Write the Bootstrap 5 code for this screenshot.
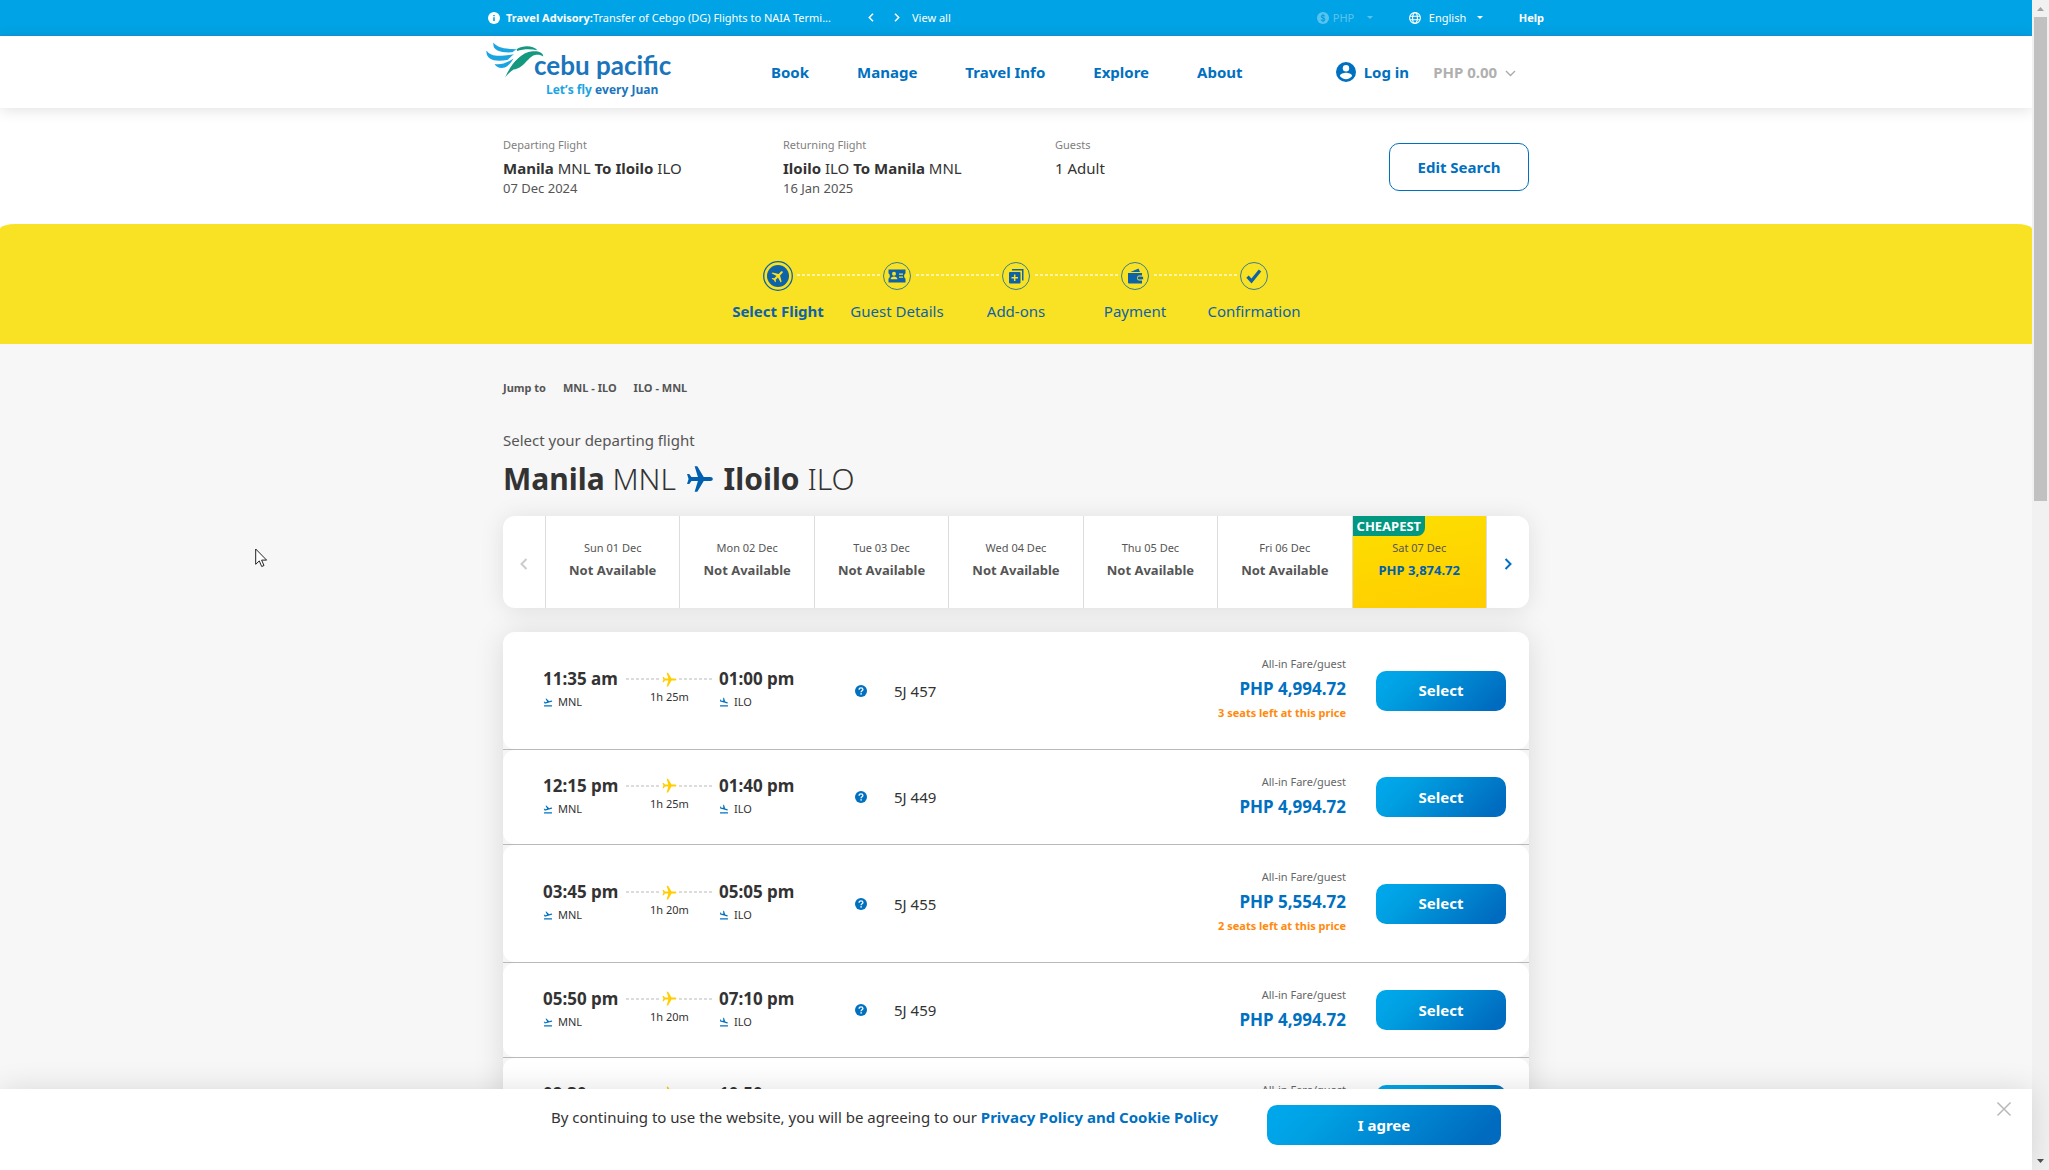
<!DOCTYPE html>
<html lang="en">
<head>
<meta charset="utf-8">
<meta name="viewport" content="width=device-width, initial-scale=1">
<title>Cebu Pacific - Select Flight</title>
<link href="https://cdn.jsdelivr.net/npm/bootstrap@5.3.0/dist/css/bootstrap.min.css" rel="stylesheet">
<style>
:root{--cp-blue:#0070c0;--cp-deep:#0e62a8;--cp-sky:#00a3e5;--cp-text:#333}
body{font-family:"Noto Sans",sans-serif;font-size:15px;line-height:22px;color:var(--cp-text);background:#fff}
a{text-decoration:none}
.shell{height:100vh;overflow:hidden}
.view{overflow:hidden;background:#f7f7f7;min-width:0}
.wrap{max-width:1080px;margin:0 auto;width:100%}
.inner{max-width:1026px;margin:0 auto;width:100%}
.fs-tiny{font-size:11px;line-height:16px}
.fs-date{font-size:13px;line-height:18px;color:#555}

.topbar{background:var(--cp-sky);height:36px;border-bottom:1px solid #1497dc;color:#fff;font-size:11px;line-height:16px}
.topbar a,.topbar select{color:#fff}
.advisory{width:336px;gap:6px}
.topbar .flat{background:none;border:0;color:#fff;padding:0;line-height:0}
.tools{gap:36px}
.pick{appearance:none;background:none;border:0;padding:0;font-size:11px;line-height:16px}
.pick:disabled{opacity:1}
.pick-php{width:34px}
.pick-lang{width:48px}
.dimmed{opacity:.35}

.mainnav{background:#fff;height:72px;box-shadow:0 2px 14px rgba(0,0,0,.12);position:relative;z-index:2}
.logo-link{width:190px;padding:0 0 4px 10px}
.wordmark{font-family:Lato,sans-serif;font-size:26px;line-height:30px;font-weight:700;color:#1b75bc;margin-left:-18px;padding-top:8px}
.tagline{font-family:"Open Sans","Noto Sans",sans-serif;font-size:12px;line-height:16px;font-weight:700;color:#1b75bc;padding-left:60px;margin-top:2px}
.tagline span{color:#1ba5e0}
.menu{gap:48px;margin-left:105px}
.menu a,.login{color:var(--cp-blue);font-weight:700}
.basket{background:none;border:0;padding:0;color:#b0b0b0;font-weight:700}

.search{background:#fff;padding:29px 0 27px}
.search .from{width:280px}
.search .back{width:272px}
.lbl{color:#808080}
.btn-edit{width:140px;height:48px;border:1px solid var(--cp-blue);border-radius:10px;color:var(--cp-blue);font-size:15px;font-weight:700}

.yellow{background:#fff}
.band{background:#f9e223;border-radius:16px 16px 0 0/5px 5px 0 0;padding:37px 0 22px}
.step{width:119px;position:relative;color:var(--cp-deep);text-align:center}
.step:not(:last-child)::after{content:"";position:absolute;left:78px;width:84px;top:13px;height:2px;background:repeating-linear-gradient(90deg,rgba(255,255,255,.6) 0 3px,transparent 3px 5px)}
.dot{height:30px;margin-bottom:9px}

.jump{gap:17px;padding-top:35px;font-size:11px;line-height:18px;font-weight:700}
.jump,.jump a{color:#555}
.sub{margin-top:32px;color:#555}
.route-title{font-size:30px;line-height:40px;font-weight:300;margin:8px 0 17px}
.route-title svg{margin:0 2px;vertical-align:-3px}

.strip{background:#fff;border-radius:12px;height:92px;box-shadow:0 2px 24px rgba(0,0,0,.1)}
.arrow{width:42px;background:none;border:0;padding:0;color:#ccc}
.day{border:0;border-left:1px solid #ddd;background:#fff;padding:24px 0 0;color:#555;position:relative}
.day b{display:block;font-size:13px;line-height:18px;margin-top:5px}
.day small{display:block;font-size:11px;line-height:16px}
.day.best{background:linear-gradient(170deg,#fddf00,#ffcd00)}
.day.best b{color:#005fae}
.tag{position:absolute;left:0;top:0;background:#009881;color:#fff;font-size:13px;line-height:20px;font-weight:700;padding:0 4px;border-radius:0 0 8px 0}
.edge{border-left:1px solid #ddd;color:#0070c0;width:43px}

.flights{margin-top:24px;border-radius:12px;background:#f5f5f5;box-shadow:0 2px 30px rgba(0,0,0,.12)}
.flight{background:#fff;border-radius:12px;padding:0 23px 0 40px}
.divider{height:1px;background:#b9b9b9}
.when{padding-bottom:3px}
.clock{font-size:17px;line-height:24px;font-weight:700}
.leg{width:83px}
.arr{width:136px;margin-left:6px}
.code{gap:5px;margin-top:2px;font-size:11px;line-height:18px}
.path{width:87px;text-align:center}
.track{height:24px;gap:2px}
.dash{flex:1;height:2px;background:repeating-linear-gradient(90deg,#dcdcdc 0 3px,transparent 3px 5px)}
.dur{font-size:11px;line-height:12px}
.fno{margin-left:27px}
.fare{text-align:right;padding:23px 30px 21px 0}
.fare .cap{font-size:11px;line-height:18px;color:#666}
.fare .amt{font-size:17px;line-height:32px;font-weight:700;color:var(--cp-blue)}
.fare .left{font-size:11px;line-height:15px;padding-bottom:8px;font-weight:700;color:#ff8a0c}
.btn-go{background:linear-gradient(135deg,#00a6ea 10%,#00a0e2 25%,#006bbf 90%);color:#fff;border:0;border-radius:10px;height:40px;width:130px;font-weight:700;font-size:15px;padding:0}
.btn-go:hover{color:#fff}

.cookie{position:absolute;left:0;right:17px;bottom:0;background:#fff;height:81px;padding-top:16px;box-shadow:0 0 30px rgba(0,0,0,.12);z-index:5}
.cookie .line{max-width:950px;margin-left:auto;margin-right:auto}
.cookie p{margin:0;padding-top:1px}
.cookie a{color:var(--cp-blue);font-weight:700}
.cookie .btn-go{width:234px}
.offset{padding-left:20px}
.shut{position:absolute;right:20px;top:12px;background:none;border:0;padding:0;line-height:0}
.rail{width:17px;background:#f1f1f1}
.thumb{width:13px;background:#c1c1c1;height:41.400%}
.pointer{position:absolute;left:255px;top:548px;z-index:6}
</style>
<script src="https://cdn.jsdelivr.net/npm/bootstrap@5.3.0/dist/js/bootstrap.bundle.min.js"></script>
</head>
<body>
<svg width="0" height="0" class="position-absolute" aria-hidden="true">
  <defs>
    <symbol id="plane" viewBox="0 0 24 24"><path d="M23 12c0-1-1-1.700-2-1.700h-5.800L9.700 1H7.400l2.800 9.300H4.700L2.800 7.800H.9L2.200 12 .9 16.200h1.900l1.900-2.500h5.500L7.400 23h2.300l5.500-9.300H21c1 0 2-.7 2-1.700z"/></symbol>
    <symbol id="takeoff" viewBox="0 0 24 24"><path d="M2.500 20h19v2.500h-19zM22 9.600c-.2-.8-1-1.300-1.900-1.100L14.800 10 7.900 3.500 6 4l4.100 7.200-5 1.300-2-1.500-1.400.4 2.600 4.500L20.900 11.600c.8-.3 1.300-1.100 1.100-2z"/></symbol>
    <symbol id="landing" viewBox="0 0 24 24"><path d="M2.500 19.500h19V23h-19zM14 14l5.300 1.400c.8.2 1.600-.3 1.900-1.100.2-.8-.3-1.600-1.100-1.900l-5.300-1.400L12 2 10.100 1.500v8.300L5.100 8.400 4.200 6.100l-1.500-.4v5.200z"/></symbol>
    <symbol id="help" viewBox="0 0 12 12"><circle cx="6" cy="6" r="6" fill="#0070c0"/><path d="M4.100 4.700C4.100 3.500 5 2.800 6 2.800s1.900.7 1.900 1.700c0 1.300-1.800 1.400-1.800 2.700" fill="none" stroke="#fff" stroke-width="1.300"/><circle cx="6.100" cy="8.900" r=".8" fill="#fff"/></symbol>
  </defs>
</svg>
<div class="shell d-flex position-relative">
  <div class="view flex-grow-1">
    <div class="topbar">
      <div class="wrap h-100 d-flex align-items-center">
        <div class="advisory ms-2 ps-1 d-flex align-items-center text-nowrap">
          <svg width="12" height="12" viewBox="0 0 12 12" class="flex-shrink-0"><circle cx="6" cy="6" r="6" fill="#fff"/><path d="M5.200 5.200h1.600V9H5.200zM5.200 2.900h1.600v1.400H5.200z" fill="#00a3e5"/></svg>
          <a href="#"><b>Travel Advisory:</b>Transfer of Cebgo (DG) Flights to NAIA Termi...</a>
        </div>
        <button class="flat ms-5" aria-label="Previous"><svg width="6" height="9" viewBox="0 0 6 9"><path d="M5 .7 1.300 4.500 5 8.300" fill="none" stroke="#fff" stroke-width="1.500"/></svg></button>
        <button class="flat ms-3 me-2 ps-1" aria-label="Next"><svg width="6" height="9" viewBox="0 0 6 9"><path d="M1 .7 4.700 4.500 1 8.300" fill="none" stroke="#fff" stroke-width="1.500"/></svg></button>
        <a href="#" class="ms-1">View all</a>
        <div class="tools ms-auto d-flex align-items-center me-2 pe-1">
          <div class="d-flex align-items-center dimmed">
            <svg width="12" height="12" viewBox="0 0 12 12" class="me-1"><circle cx="6" cy="6" r="6" fill="#fff"/><path d="M7.800 4.300C7.600 3.500 7 3.200 6 3.200c-2.300 0-2.300 2.300 0 2.700 2.500.4 2.300 3 0 3-1.100 0-1.800-.4-2-1.300M6 1.800v8.400" fill="none" stroke="#00a3e5" stroke-width="1.100"/></svg>
            <select class="pick pick-php" aria-label="Currency" disabled><option>PHP</option></select>
            <svg width="6" height="3" viewBox="0 0 6 3"><path d="M0 0h6L3 3z" fill="#fff"/></svg>
          </div>
          <div class="d-flex align-items-center">
            <svg width="12" height="12" viewBox="0 0 12 12" fill="none" stroke="#fff" stroke-width="1.100" class="me-1"><circle cx="6" cy="6" r="5.400"/><ellipse cx="6" cy="6" rx="2.400" ry="5.400"/><path d="M.9 4.200h10.200M.9 7.800h10.200"/></svg>
            <select class="pick pick-lang ms-1" aria-label="Language"><option>English</option></select>
            <svg width="6" height="3" viewBox="0 0 6 3"><path d="M0 0h6L3 3z" fill="#fff"/></svg>
          </div>
          <a href="#" class="fw-bold">Help</a>
        </div>
      </div>
    </div>

    <header class="mainnav">
      <div class="wrap h-100 d-flex align-items-center">
        <a href="#" class="logo-link">
          <div class="d-flex">
            <svg width="66" height="38" viewBox="0 0 66 38" class="flex-shrink-0" aria-hidden="true">
              <path d="M7.500.5C11 5.500 17 6.800 31.500 7.300c-2 .8-3.500 1.700-5 3C14 11 6 8.500 7.500.5z" fill="#1ba5e0"/>
              <path d="M.5 8.500c4 6 12 6.500 27.500 3.700-3 2.200-4.500 3.800-6 5.500C9.500 20.500-.5 18 .5 8.500z" fill="#1ba5e0"/>
              <path d="M8.500 22c5 1 10-.5 15-3l4-2.500c-2 3.500-4 6-6 7.500-4 3-10.500 2.500-13-2z" fill="#1ba5e0"/>
              <path d="M31 7C37 3 47 3 51.500 8.300 44 6.500 37.500 7 31 8.900z" fill="#159880"/>
              <path d="M19 35.500C25 23 33 11 46.500 9.300c5-.6 10.500.5 10.800 5.200-2.300-1.700-5.300-2.100-8.300-1.500-5 1-8.500 7.500-14 11.500-2.500 1.800-5 2.700-7.500 3-3.500 2.500-6 4.600-8.500 8z" fill="#159880"/>
              <path d="M22 27.500C27 19 32 12.500 41 9.100 34 13.500 28 19.500 22 27.500z" fill="#fff"/>
            </svg>
            <span class="wordmark text-nowrap">cebu pacific</span>
          </div>
          <div class="tagline text-nowrap"><span>Let’s fly</span> every Juan</div>
        </a>
        <nav class="menu d-flex text-nowrap"><a href="#">Book</a><a href="#">Manage</a><a href="#">Travel Info</a><a href="#">Explore</a><a href="#">About</a></nav>
        <div class="ms-auto me-4 pe-3 d-flex align-items-center text-nowrap">
          <a href="#" class="login d-flex align-items-center me-4"><svg width="20" height="20" viewBox="0 0 20 20" class="me-2"><circle cx="10" cy="10" r="10" fill="#0070c0"/><circle cx="10" cy="6.300" r="3.200" fill="#fff"/><path d="M3.900 14c0-2.200 4-3.300 6.100-3.300s6.100 1.100 6.100 3.300a7.400 7.400 0 0 1-12.200 0z" fill="#fff"/></svg>Log in</a>
          <button class="basket">PHP 0.00 <svg width="11" height="7" viewBox="0 0 11 7" class="ms-1"><path d="m1 1 4.500 4.500L10 1" fill="none" stroke="#aaa" stroke-width="1.400"/></svg></button>
        </div>
      </div>
    </header>

    <section class="search">
      <div class="inner d-flex align-items-center">
        <div class="from"><div class="fs-tiny lbl mb-1">Departing Flight</div><div><b>Manila</b> MNL <b>To</b> <b>Iloilo</b> ILO</div><div class="fs-date">07 Dec 2024</div></div>
        <div class="back"><div class="fs-tiny lbl mb-1">Returning Flight</div><div><b>Iloilo</b> ILO <b>To</b> <b>Manila</b> MNL</div><div class="fs-date">16 Jan 2025</div></div>
        <div class="align-self-start"><div class="fs-tiny lbl mb-1">Guests</div><div>1 Adult</div></div>
        <button class="btn btn-edit ms-auto">Edit Search</button>
      </div>
    </section>

    <section class="yellow"><div class="band d-flex justify-content-center">
      <div class="step fw-bold"><div class="dot"><svg width="30" height="30" viewBox="0 0 30 30"><circle cx="15" cy="15" r="14.300" fill="none" stroke="#0e62a8" stroke-width="1.300"/><circle cx="15" cy="15" r="11" fill="#0e62a8"/><use href="#plane" x="8" y="8" width="14" height="14" fill="#f9e223" transform="rotate(-45 15 15)"/></svg></div>Select Flight</div>
      <div class="step"><div class="dot"><svg width="30" height="30" viewBox="0 0 30 30" fill="#0e62a8"><circle cx="15" cy="15" r="13.500" fill="none" stroke="#0e62a8" stroke-width=".8"/><path d="M6.500 8.500h17v4c-1.800.6-1.800 4.400 0 5v4h-17v-4c1.800-.6 1.800-4.400 0-5z"/><g fill="#f9e223"><circle cx="12" cy="12.700" r="2"/><path d="M8.600 18.300c0-3.700 6.800-3.700 6.800 0zM17 12.500h4v1.300h-4zM17 15.500h4v1.300h-4z"/></g></svg></div>Guest Details</div>
      <div class="step"><div class="dot"><svg width="30" height="30" viewBox="0 0 30 30" fill="#0e62a8"><circle cx="15" cy="15" r="13.500" fill="none" stroke="#0e62a8" stroke-width=".8"/><rect x="8" y="11" width="11.500" height="11.500" rx="1"/><path d="M11 8h11.500v11.500H21V9.500H11z"/><path d="M13.700 13.500v6.500M10.500 16.700H17" stroke="#f9e223" stroke-width="1.500"/></svg></div>Add-ons</div>
      <div class="step"><div class="dot"><svg width="30" height="30" viewBox="0 0 30 30" fill="#0e62a8"><circle cx="15" cy="15" r="13.500" fill="none" stroke="#0e62a8" stroke-width=".8"/><path d="M8 12h14v10.500H9a1 1 0 0 1-1-1zM10.500 11l8-3.500L20 11z"/><rect x="17.500" y="15" width="6" height="4" rx="1.500" stroke="#f9e223" stroke-width="1"/></svg></div>Payment</div>
      <div class="step"><div class="dot"><svg width="30" height="30" viewBox="0 0 30 30"><circle cx="15" cy="15" r="13.500" fill="none" stroke="#0e62a8" stroke-width=".8"/><path d="m8.500 15.700 4 4.300L21 9.500" fill="none" stroke="#0e62a8" stroke-width="3.200"/></svg></div>Confirmation</div>
    </div></section>

    <main class="inner">
      <nav class="jump d-flex"><span>Jump to</span><a href="#out">MNL - ILO</a><a href="#back">ILO - MNL</a></nav>
      <div class="sub" id="out">Select your departing flight</div>
      <h1 class="route-title"><span class="fw-bold">Manila</span> MNL <svg width="28" height="28" viewBox="0 0 24 24" fill="#005fae"><use href="#plane"/></svg> <span class="fw-bold">Iloilo</span> ILO</h1>

      <div class="strip d-flex">
        <button class="arrow" aria-label="Earlier dates"><svg width="8" height="12" viewBox="0 0 8 12"><path d="M6.500 1 1.500 6l5 5" fill="none" stroke="#ccc" stroke-width="2"/></svg></button>
        <div class="d-flex flex-grow-1" id="days"></div>
        <button class="arrow edge" aria-label="Later dates"><svg width="8" height="12" viewBox="0 0 8 12"><path d="m1.500 1 5 5-5 5" fill="none" stroke="#0070c0" stroke-width="2"/></svg></button>
      </div>

      <div class="flights" id="flights"></div>
    </main>
  </div>

  <div class="rail d-flex flex-column align-items-center justify-content-between">
    <svg width="17" height="17" viewBox="0 0 17 17" class="flex-shrink-0"><path d="M5 11h7L8.500 7z" fill="#a3a3a3"/></svg>
    <div class="thumb mb-auto"></div>
    <svg width="17" height="17" viewBox="0 0 17 17" class="flex-shrink-0"><path d="M5 6h7l-3.500 4z" fill="#505050"/></svg>
  </div>

  <div class="cookie">
    <div class="offset"><div class="line d-flex justify-content-between align-items-start">
      <p>By continuing to use the website, you will be agreeing to our <a href="#">Privacy Policy and Cookie Policy</a></p>
      <button class="btn btn-go">I agree</button>
    </div></div>
    <button class="shut" aria-label="Close"><svg width="16" height="16" viewBox="0 0 16 16"><path d="m1.500 1.500 13 13M14.500 1.500l-13 13" stroke="#b8b8b8" stroke-width="1.500"/></svg></button>
  </div>

  <svg class="pointer" width="13" height="20" viewBox="0 0 13 20" aria-hidden="true"><path d="M.7 1v15.300l3.600-3.400 2.400 5.600 2.300-1-2.400-5.400h5z" fill="#fff" stroke="#222" stroke-width="1"/></svg>
</div>

<script>
const days = ["Sun 01 Dec","Mon 02 Dec","Tue 03 Dec","Wed 04 Dec","Thu 05 Dec","Fri 06 Dec","Sat 07 Dec"];
document.getElementById("days").innerHTML = days.map((d, i) => i < 6
  ? `<button class="day flex-fill w-100 d-flex flex-column align-items-center"><small>${d}</small><b>Not Available</b></button>`
  : `<button class="day best flex-fill w-100 d-flex flex-column align-items-center"><span class="tag">CHEAPEST</span><small>${d}</small><b>PHP 3,874.72</b></button>`).join("");

const flights = [
  ["11:35 am","01:00 pm","1h 25m","5J 457","4,994.72",3],
  ["12:15 pm","01:40 pm","1h 25m","5J 449","4,994.72",0],
  ["03:45 pm","05:05 pm","1h 20m","5J 455","5,554.72",2],
  ["05:50 pm","07:10 pm","1h 20m","5J 459","4,994.72",0],
  ["09:30 pm","10:50 pm","1h 20m","5J 461","4,994.72",0]
];
document.getElementById("flights").innerHTML = flights.map(f => `
  <div class="flight d-flex align-items-center">
    <div class="when d-flex">
      <div class="leg text-nowrap"><div class="clock">${f[0]}</div><div class="code d-flex align-items-center"><svg width="10" height="10" fill="#0070c0"><use href="#takeoff"/></svg>MNL</div></div>
      <div class="path"><div class="track d-flex align-items-center"><i class="dash"></i><svg width="15" height="15" fill="#ffcd00"><use href="#plane"/></svg><i class="dash"></i></div><div class="dur">${f[2]}</div></div>
      <div class="arr text-nowrap"><div class="clock">${f[1]}</div><div class="code d-flex align-items-center"><svg width="10" height="10" fill="#0070c0"><use href="#landing"/></svg>ILO</div></div>
    </div>
    <svg width="12" height="12"><use href="#help"/></svg>
    <div class="fno">${f[3]}</div>
    <div class="fare ms-auto"><div class="cap">All-in Fare/guest</div><div class="amt">PHP ${f[4]}</div>${f[5] ? `<div class="left">${f[5]} seats left at this price</div>` : ""}</div>
    <button class="btn btn-go">Select</button>
  </div>`).join('<div class="divider"></div>');
</script>
</body>
</html>
